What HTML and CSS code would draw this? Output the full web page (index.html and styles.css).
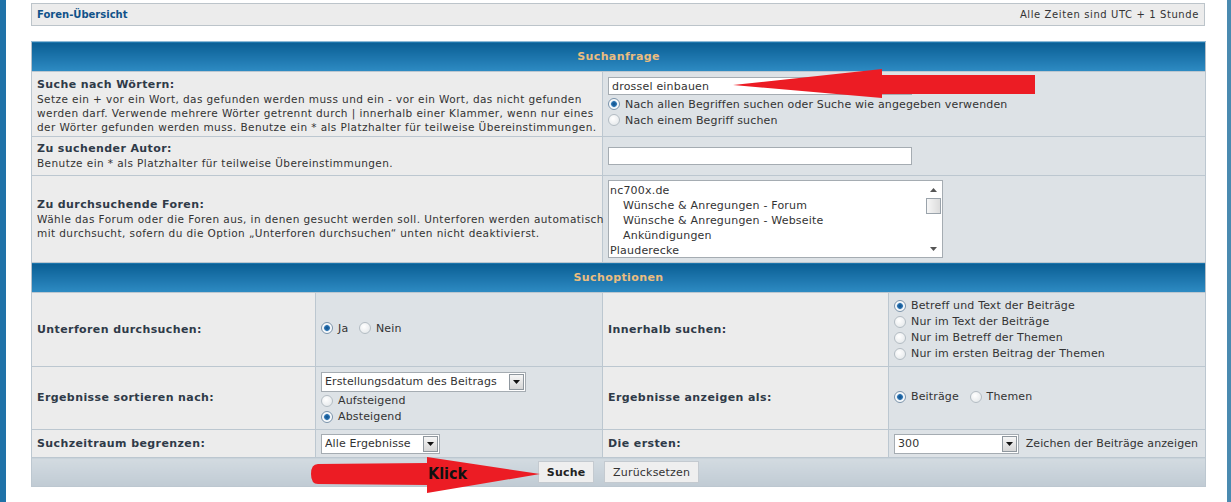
FILE: index.html
```html
<!DOCTYPE html>
<html lang="de">
<head>
    <meta charset="UTF-8">
    <title>Suche</title>
    <link rel="stylesheet" href="styles.css">
</head>
<body>
    <div class="page">
        <table class="navbar">
            <tr>
                <td class="nav"><a href="#">Foren-Übersicht</a></td>
                <td class="tz">Alle Zeiten sind UTC + 1 Stunde</td>
            </tr>
        </table>

        <form class="search-form">
        <table class="forumline">
            <colgroup>
                <col class="c1"><col class="c2"><col class="c3"><col class="c4">
            </colgroup>
            <tr class="head-row"><th colspan="4" class="head">Suchanfrage</th></tr>

            <!-- Suchanfrage -->
            <tr class="words">
                <td class="row1 text" colspan="2">
                    <div class="label">Suche nach Wörtern:</div>
                    <div class="desc">Setze ein + vor ein Wort, das gefunden werden muss und ein - vor ein Wort, das nicht gefunden<br>werden darf. Verwende mehrere Wörter getrennt durch | innerhalb einer Klammer, wenn nur eines<br>der Wörter gefunden werden muss. Benutze ein * als Platzhalter für teilweise Übereinstimmungen.</div>
                </td>
                <td class="row2 top" colspan="2">
                    <input class="post" type="text" value="drossel einbauen">
                    <label class="opt"><input class="radio" type="radio" name="terms" checked>Nach allen Begriffen suchen oder Suche wie angegeben verwenden</label>
                    <label class="opt"><input class="radio" type="radio" name="terms">Nach einem Begriff suchen</label>
                </td>
            </tr>
            <tr class="author">
                <td class="row1 text" colspan="2">
                    <div class="label">Zu suchender Autor:</div>
                    <div class="desc">Benutze ein * als Platzhalter für teilweise Übereinstimmungen.</div>
                </td>
                <td class="row2" colspan="2"><input class="post" type="text"></td>
            </tr>
            <tr class="forums">
                <td class="row1 text" colspan="2">
                    <div class="label">Zu durchsuchende Foren:</div>
                    <div class="desc">Wähle das Forum oder die Foren aus, in denen gesucht werden soll. Unterforen werden automatisch<br>mit durchsucht, sofern du die Option „Unterforen durchsuchen“ unten nicht deaktivierst.</div>
                </td>
                <td class="row2" colspan="2">
                    <div class="listbox">
                        <div class="items">
                            <div>nc700x.de</div>
                            <div class="sub">Wünsche &amp; Anregungen - Forum</div>
                            <div class="sub">Wünsche &amp; Anregungen - Webseite</div>
                            <div class="sub">Ankündigungen</div>
                            <div>Plauderecke</div>
                        </div>
                        <div class="scroll">
                            <span class="arr"><svg width="7" height="4" viewBox="0 0 7 4"><path d="M0 4h7L3.5 0z" fill="#555"/></svg></span>
                            <span class="thumb"></span>
                            <span class="track"></span>
                            <span class="arr"><svg width="7" height="4" viewBox="0 0 7 4"><path d="M0 0h7L3.5 4z" fill="#555"/></svg></span>
                        </div>
                    </div>
                </td>
            </tr>

            <tr class="head-row"><th colspan="4" class="head">Suchoptionen</th></tr>

            <!-- Suchoptionen -->
            <tr class="opt-a">
                <td class="row1 label">Unterforen durchsuchen:</td>
                <td class="row2">
                    <label class="inl"><input class="radio" type="radio" name="sub" checked>Ja</label>
                    <label class="inl"><input class="radio" type="radio" name="sub">Nein</label>
                </td>
                <td class="row1 label">Innerhalb suchen:</td>
                <td class="row2">
                    <label class="opt"><input class="radio" type="radio" name="fields" checked>Betreff und Text der Beiträge</label>
                    <label class="opt"><input class="radio" type="radio" name="fields">Nur im Text der Beiträge</label>
                    <label class="opt"><input class="radio" type="radio" name="fields">Nur im Betreff der Themen</label>
                    <label class="opt"><input class="radio" type="radio" name="fields">Nur im ersten Beitrag der Themen</label>
                </td>
            </tr>
            <tr class="opt-b">
                <td class="row1 label">Ergebnisse sortieren nach:</td>
                <td class="row2">
                    <span class="select w-sort">
                        <select><option>Erstellungsdatum des Beitrags</option></select>
                        <span class="drop"><svg width="7" height="4" viewBox="0 0 7 4"><path d="M0 0h7L3.5 4z" fill="#111"/></svg></span>
                    </span>
                    <label class="opt"><input class="radio" type="radio" name="dir">Aufsteigend</label>
                    <label class="opt"><input class="radio" type="radio" name="dir" checked>Absteigend</label>
                </td>
                <td class="row1 label">Ergebnisse anzeigen als:</td>
                <td class="row2">
                    <label class="inl"><input class="radio" type="radio" name="show" checked>Beiträge</label>
                    <label class="inl"><input class="radio" type="radio" name="show">Themen</label>
                </td>
            </tr>
            <tr class="opt-c">
                <td class="row1 label">Suchzeitraum begrenzen:</td>
                <td class="row2">
                    <span class="select w-time">
                        <select><option>Alle Ergebnisse</option></select>
                        <span class="drop"><svg width="7" height="4" viewBox="0 0 7 4"><path d="M0 0h7L3.5 4z" fill="#111"/></svg></span>
                    </span>
                </td>
                <td class="row1 label">Die ersten:</td>
                <td class="row2 nowrap">
                    <span class="select w-chars">
                        <select><option>300</option></select>
                        <span class="drop"><svg width="7" height="4" viewBox="0 0 7 4"><path d="M0 0h7L3.5 4z" fill="#111"/></svg></span>
                    </span>
                    <span class="after">Zeichen der Beiträge anzeigen</span>
                </td>
            </tr>
            <tr class="foot">
                <td colspan="4" class="cat">
                    <button class="btn main" type="button">Suche</button>
                    <button class="btn" type="reset">Zurücksetzen</button>
                </td>
            </tr>
        </table>
        </form>
    </div>

    <!-- rote Pfeile (Markierung im Screenshot) -->
    <svg class="marks" width="1231" height="502" viewBox="0 0 1231 502">
        <polygon points="733,85 882,69 882,75 1035,75 1035,94 882,94 882,98" fill="#ec1c24"/>
        <path d="M318,464 L427,463 L427,457 L540,474 L427,493 L427,485 L318,484 Q311,484 311,474 Q311,464 318,464 Z" fill="#ec1c24"/>
        <text x="428" y="479" class="klick">Klick</text>
    </svg>
</body>
</html>
```

FILE: styles.css
```css
*{
    box-sizing: border-box;
}
body{
    margin: 0;
    background-color: #fff;
    font-family: "DejaVu Sans", Verdana, sans-serif;
    color: #333;
    position: relative;
}
.page{
    min-height: 100vh;
    border-left: 6px solid #1f72a8;
    border-right: 4px solid #4a8ab0;
    padding: 3px 22px 0 25px;
}

/* Navigationsleiste */
.navbar{
    width: 100%;
    height: 23px;
    border-collapse: collapse;
    border: 1px solid #bcc4ca;
    background-color: #ececec;
    font-size: 10px;
}
.navbar td{
    padding: 0 5px;
}
.nav a{
    color: #105289;
    font-weight: bold;
    text-decoration: none;
}
.tz{
    text-align: right;
    color: #333;
    letter-spacing: 0.6px;
}

/* Suchformular */
.search-form{
    margin: 15px 0 0;
}
.forumline{
    width: 100%;
    border-collapse: collapse;
    table-layout: fixed;
    border: 1px solid #b4c0ca;
}
.c1{ width: 284px; }
.c2{ width: 287px; }
.c3{ width: 286px; }
.c4{ width: 317px; }
.forumline td{
    border: 1px solid #bcc7d0;
    padding: 0 5px;
    font-size: 11px;
    letter-spacing: 0.15px;
}
.forumline td.text{
    padding-right: 0;
}
.words .text{
    padding-top: 4px;
}
.nowrap{
    white-space: nowrap;
}
.head{
    height: 30px;
    padding: 0;
    background: linear-gradient(#0a5e94, #2e8bc3);
    border-top: 1px solid #8fbad6;
    color: #ebbd7f;
    font-size: 11px;
    font-weight: bold;
    letter-spacing: 0.4px;
}
.row1{
    background-color: #ececec;
}
.row2{
    background-color: #dde2e6;
}
.top{
    vertical-align: top;
    padding-top: 5px !important;
}
.forumline .label{
    font-weight: bold;
    color: #2f3a48;
    line-height: 14px;
    letter-spacing: 0.4px;
}
.desc{
    font-size: 10.5px;
    line-height: 14px;
    letter-spacing: 0.42px;
    white-space: nowrap;
    color: #333;
}
.words{ height: 65px; }
.author{ height: 39px; }
.forums{ height: 87px; }
.opt-a{ height: 74px; }
.opt-b{ height: 63px; }
.opt-c{ height: 28px; }
.foot{ height: 29px; }

.post{
    display: block;
    width: 304px;
    height: 18px;
    margin: 0;
    padding: 0 3px;
    border: 1px solid #a5acb2;
    background-color: #fff;
    font: 11px "DejaVu Sans", Verdana, sans-serif;
    letter-spacing: 0.2px;
    color: #333;
}
.top .post{
    margin-bottom: 1px;
}
.opt{
    display: flex;
    align-items: center;
    height: 16px;
    color: #333;
}
.inl{
    display: inline-flex;
    align-items: center;
    margin-right: 7px;
    color: #333;
}
.radio{
    appearance: none;
    width: 12px;
    height: 12px;
    margin: 0 5px 0 0;
    border: 1px solid #b3bcc3;
    border-radius: 50%;
    background: radial-gradient(circle at 40% 35%, #fff, #e0e4e7);
    flex: none;
}
.radio:checked{
    border-color: #7a93aa;
    background: radial-gradient(circle at 50% 50%, #0c4f8a 0, #2b72b0 2.5px, #cfe1f1 3.2px, #fff 4px, #e6eaed 100%);
}

/* Listbox */
.listbox{
    display: flex;
    width: 335px;
    height: 78px;
    border: 1px solid #a5acb2;
    background-color: #fff;
}
.items{
    flex: 1;
    padding: 2px 1px 0;
    font-size: 11px;
    line-height: 15px;
    letter-spacing: 0.2px;
    color: #333;
}
.items .sub{
    padding-left: 13px;
}
.scroll{
    width: 17px;
    display: flex;
    flex-direction: column;
}
.scroll .arr{
    height: 17px;
    display: flex;
    align-items: center;
    justify-content: center;
}
.scroll .thumb{
    height: 16px;
    margin: 0 1px;
    border: 1px solid #9aa3ab;
    background: linear-gradient(to right, #f6f6f6, #dcdcdc);
}
.scroll .track{
    flex: 1;
}

/* Auswahlfelder */
.select{
    display: inline-flex;
    align-items: center;
    height: 20px;
    border: 1px solid #a5acb2;
    background-color: #fff;
    vertical-align: middle;
}
.select select{
    appearance: none;
    flex: 1;
    min-width: 0;
    border: none;
    background: transparent;
    padding: 0 3px;
    font: 11px "DejaVu Sans", Verdana, sans-serif;
    letter-spacing: 0.1px;
    color: #333;
    outline: none;
}
.drop{
    width: 15px;
    height: 16px;
    margin-right: 1px;
    border: 1px solid #8f979e;
    background: linear-gradient(#f6f6f6, #d6d6d6);
    display: flex;
    align-items: center;
    justify-content: center;
}
.w-sort{ width: 205px; margin-bottom: 1px; }
.w-time{ width: 119px; }
.w-chars{ width: 125px; }
.after{
    margin-left: 3px;
    vertical-align: middle;
    letter-spacing: 0.1px;
}

/* Buttons */
.cat{
    text-align: center;
    background: linear-gradient(#d3dbe1, #c0cbd4);
}
.btn{
    height: 22px;
    margin: 0 3px;
    padding: 0 8px;
    border: 1px solid #c4cad0;
    background-color: #efefef;
    font: 11px "DejaVu Sans", Verdana, sans-serif;
    letter-spacing: 0.2px;
    color: #333;
    vertical-align: middle;
}
.btn.main{
    font-weight: bold;
    color: #222;
}

/* Markierung */
.marks{
    position: absolute;
    top: 0;
    left: 0;
    pointer-events: none;
}
.klick{
    font-family: "DejaVu Sans Condensed", "DejaVu Sans", sans-serif;
    font-weight: bold;
    font-size: 16px;
    fill: #111;
}
```
